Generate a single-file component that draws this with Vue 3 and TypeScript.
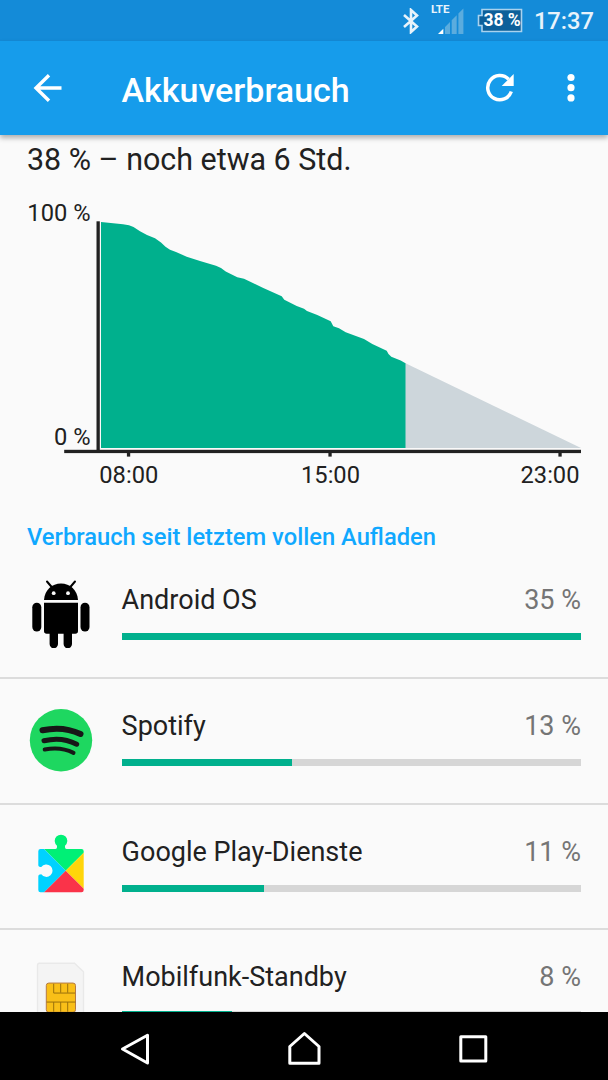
<script setup lang="ts">
interface Usage {
  id: string
  name: string
  share: number
  fill: number
}

const usages: Usage[] = [
  { id: 'android', name: 'Android OS', share: 35, fill: 100 },
  { id: 'spotify', name: 'Spotify', share: 13, fill: 37.1 },
  { id: 'play', name: 'Google Play-Dienste', share: 11, fill: 31.1 },
  { id: 'sim', name: 'Mobilfunk-Standby', share: 8, fill: 24 },
]

const history: [number, number][] = [
  [101, 222], [123, 224.3], [129, 225.3], [133.5, 227], [140, 231.3], [147, 235], [155, 238.2], [161, 242.5],
  [165.5, 246.7], [170, 249.7], [176, 252], [186.7, 256.7], [200, 260.9], [216, 265.8], [221, 268],
  [225.7, 271.5], [237.3, 277.3], [244, 278.7], [263.3, 287.9], [281.7, 296.3], [284.3, 299.7],
  [296.7, 306], [304, 308.7], [307, 311], [317.3, 315], [330.7, 321.3], [333.3, 326.3], [339, 328.3],
  [345.7, 332.3], [364, 339], [372.3, 344], [386.7, 350.7], [388.5, 354], [391.3, 356.7], [400.7, 360.5], [405.5, 363.3],
]
const area = `M101 448 L${history.map((p) => p.join(' ')).join(' L')} L405.5 448 Z`
const ticks = [
  { x: 128.5, labelX: 128.8, text: '08:00' },
  { x: 330, labelX: 330.5, text: '15:00' },
  { x: 560, labelX: 550, text: '23:00' },
]
</script>

<template>
  <div class="screen">
    <header class="status">
      <svg class="bt" width="18" height="26" viewBox="0 0 18 26">
        <path d="M2 7 L15 18.5 L9 24 V2 L15 7.5 L2 19" />
      </svg>
      <div class="cell">
        <span class="lte">LTE</span>
        <svg width="34" height="34" viewBox="432 0 34 34">
          <path class="dim" d="M446 34V27L451 22V34ZM452.700 34V20.300L457.700 15.300V34ZM459.400 34V13.600L464.400 8.600V34Z" />
          <path class="lit" d="M439 34L444.300 28.700V34Z" />
        </svg>
      </div>
      <div class="battery">
        <svg width="46" height="25" viewBox="0 0 46 25">
          <path d="M5 1.500H44.500V23.500H5V17.500H1.500V7.500H5Z" />
        </svg>
        <span>38 %</span>
      </div>
      <span class="clock">17:37</span>
    </header>

    <div class="toolbar">
      <svg class="back" width="32" height="32" viewBox="0 0 32 32">
        <path d="M29.500 16H5M17 3.200L4 16L17 28.800" />
      </svg>
      <h1>Akkuverbrauch</h1>
      <svg class="refresh" width="40" height="40" viewBox="480 68 40 40">
        <path class="arc" d="M511.300 91.500A12.100 12.100 0 1 1 508.600 79.300" />
        <path class="tip" d="M513.700 74V86H501.700Z" />
      </svg>
      <svg class="more" width="12" height="32" viewBox="0 0 12 32">
        <circle cx="6" cy="5.500" r="3.600" />
        <circle cx="6" cy="15.700" r="3.600" />
        <circle cx="6" cy="25.900" r="3.600" />
      </svg>
    </div>

    <main>
      <p class="summary">38 % – noch etwa 6 Std.</p>
      <svg class="chart" width="608" height="310" viewBox="0 190 608 310">
        <path class="forecast" d="M405 448V363L581 448Z" />
        <path class="used" :d="area" />
        <rect class="axis" x="96.500" y="221.300" width="3.300" height="230" />
        <rect class="axis" x="64.200" y="449.800" width="516.800" height="3.300" />
        <rect v-for="t in ticks" :key="t.text" class="axis" :x="t.x - 1.600" y="452" width="3.300" height="4.600" />
        <text x="90.500" y="221" text-anchor="end">100 %</text>
        <text x="90.500" y="444.500" text-anchor="end">0 %</text>
        <text v-for="t in ticks" :key="t.text" :x="t.labelX" y="482.700" text-anchor="middle">{{ t.text }}</text>
      </svg>
      <h2>Verbrauch seit letztem vollen Aufladen</h2>

      <ul>
        <li v-for="u in usages" :key="u.id">
          <svg v-if="u.id === 'android'" class="icon" viewBox="27 580 68 68">
            <path d="M47 581.500L52.500 588M75 581.500L69.500 588" fill="none" stroke="#000" stroke-width="2" stroke-linecap="round" />
            <path d="M44 600C44.500 590 52 583.500 61 583.500S77.500 590 78 600Z" />
            <circle cx="53.700" cy="593.200" r="1.900" fill="#fafafa" />
            <circle cx="68" cy="593.200" r="1.900" fill="#fafafa" />
            <path d="M44 602.700H78V631Q78 633.700 75.300 633.700H72V644A4.200 4.200 0 0 1 63.600 644V633.700H58V644A4.200 4.200 0 0 1 49.600 644V633.700H46.700Q44 633.700 44 631Z" />
            <rect x="32.300" y="602.800" width="9" height="28.700" rx="4.500" />
            <rect x="80.500" y="602.800" width="9" height="28.700" rx="4.500" />
          </svg>
          <svg v-else-if="u.id === 'spotify'" class="icon" viewBox="27 705.750 68 68">
            <circle cx="61" cy="740" r="31.200" fill="#1ed760" />
            <g fill="none" stroke="#171717" stroke-linecap="round">
              <path d="M42.500 730Q63 725.500 80.500 733.700" stroke-width="6" />
              <path d="M44 740.500Q61.500 736 76.700 744" stroke-width="5" />
              <path d="M44.700 749.300Q60.500 746 73.500 752.600" stroke-width="4" />
            </g>
          </svg>
          <svg v-else-if="u.id === 'play'" class="icon" viewBox="27 832 68 68">
            <defs>
              <clipPath id="puzzle">
                <path d="M40.500 849H55.500Q57 849 57 847.200V845.800A6.300 6.300 0 1 1 65 845.800V847.200Q65 849 66.500 849H81.500Q83.700 849 83.700 851.200V890.100Q83.700 892.300 81.500 892.300H40.500Q38.300 892.300 38.300 890.100V876.500Q38.300 874.300 41.300 874.300A6.200 6.200 0 1 0 41.300 867.100Q38.300 867.100 38.300 865V851.200Q38.300 849 40.500 849Z" />
              </clipPath>
            </defs>
            <g clip-path="url(#puzzle)">
              <path d="M34 834H88V848.500L65.700 870.700L38 843Z" fill="#00f076" />
              <path d="M36 841L65.700 870.700L42 894.400H36Z" fill="#00d2ff" />
              <path d="M85 851.400V890L65.700 870.700Z" fill="#ffd50a" />
              <path d="M65.700 870.700L87 892V895H41.400Z" fill="#fa3349" />
            </g>
          </svg>
          <svg v-else class="icon" viewBox="27 957.250 68 68">
            <path d="M39.500 963.500H74.500L83.500 972V1030H37.500V965.500Q37.500 963.500 39.500 963.500Z" fill="#f4f4f4" stroke="#e9e9e9" stroke-width="1.300" />
            <rect x="46.300" y="983.300" width="29.200" height="29.200" rx="2.500" fill="#f9bf18" stroke="#b47a45" />
            <path d="M75 993.300H53.700V984M60.700 984V993M67.700 984V993M46.500 1002.300H75.500M53.700 1002.300V1012M60.700 1002.300V1012M67.700 1002.300V1012" fill="none" stroke="#99700c" />
          </svg>
          <div class="details">
            <div class="labels">
              <span>{{ u.name }}</span>
              <span class="share">{{ u.share }} %</span>
            </div>
            <div class="track"><div class="fill" :style="{ width: u.fill + '%' }"></div></div>
          </div>
        </li>
      </ul>
    </main>

    <nav>
      <svg width="608" height="68" viewBox="0 1012 608 68">
        <path d="M147.500 1035.300V1063L122.500 1049Z" />
        <path d="M289.800 1063.300V1046.500L304.400 1033.500L319 1046.500V1063.300Z" />
        <rect x="460.800" y="1036.700" width="25" height="24.300" />
      </svg>
    </nav>
  </div>
</template>

<style>
body {
  margin: 0;
}
</style>

<style scoped>
.screen {
  width: 608px;
  height: 1080px;
  overflow: hidden;
  display: flex;
  flex-direction: column;
  background: #fafafa;
  color: #212121;
  font-family: Roboto, sans-serif;
}
svg {
  display: block;
  flex: none;
}
.status {
  flex: none;
  height: 41px;
  box-sizing: border-box;
  padding-right: 14px;
  display: flex;
  align-items: center;
  justify-content: flex-end;
  background: #148bd8;
  color: #e8f3fb;
}
.bt {
  margin-right: 11px;
}
.bt path {
  fill: none;
  stroke: #e8f3fb;
  stroke-width: 2.6;
}
.cell {
  position: relative;
  height: 41px;
  margin-right: 12px;
}
.lte {
  position: absolute;
  left: 0;
  top: 3px;
  font-size: 11.5px;
  line-height: 13px;
  font-weight: 700;
}
.dim {
  fill: #5bacde;
}
.lit {
  fill: #fff;
}
.battery {
  position: relative;
  margin-right: 11px;
}
.battery path {
  fill: #0d609a;
  stroke: #a9d2ee;
  stroke-width: 1.6;
}
.battery span {
  position: absolute;
  inset: 0 0 0 6.5px;
  font-size: 17.5px;
  line-height: 24px;
  font-weight: 700;
  color: #fff;
  white-space: nowrap;
}
.clock {
  font-size: 23.7px;
  line-height: 28px;
  margin-top: 1px;
  font-weight: 500;
}
.toolbar {
  flex: none;
  height: 94px;
  position: relative;
  display: flex;
  align-items: center;
  background: #169ceb;
  color: #fff;
  box-shadow: 0 3px 5px rgba(0, 0, 0, 0.3);
}
.back {
  margin-left: 31.5px;
}
.back path {
  fill: none;
  stroke: #fff;
  stroke-width: 3.4;
}
h1 {
  margin: 4px auto 0 58px;
  font-size: 34px;
  font-weight: 500;
  line-height: 40px;
}
.refresh {
  margin-right: 45px;
}
.arc {
  fill: none;
  stroke: #fff;
  stroke-width: 3.5;
}
.tip,
.more {
  fill: #fff;
}
.more {
  margin-right: 31px;
}
main {
  height: 877px;
  overflow: hidden;
}
.summary {
  margin: 0;
  padding: 6px 27px 0;
  height: 49px;
  line-height: 38px;
  font-size: 30.45px;
}
.chart text {
  font-size: 23.7px;
  fill: #212121;
}
.axis {
  fill: #212121;
}
.used {
  fill: #00b08d;
}
.forecast {
  fill: #cdd6db;
}
h2 {
  margin: 0;
  padding: 23px 27px 0;
  height: 25px;
  line-height: 28px;
  font-size: 23.72px;
  font-weight: 500;
  color: #10a8ff;
}
ul {
  margin: 0;
  padding: 5.2px 0 0;
  list-style: none;
}
li {
  height: 125.75px;
  box-sizing: border-box;
  padding: 27px 27px 0;
  display: flex;
  gap: 26.6px;
  border-bottom: 2px solid #dcdcdc;
}
.icon {
  width: 68px;
  height: 68px;
}
.details {
  flex: 1;
}
.labels {
  display: flex;
  justify-content: space-between;
  height: 53.2px;
  line-height: 41px;
  font-size: 27px;
}
.share {
  color: #757575;
}
.track {
  height: 7px;
  background: #d6d6d6;
}
.fill {
  height: 100%;
  background: #00b08d;
}
nav {
  height: 68px;
  background: #000;
}
nav path,
nav rect {
  fill: none;
  stroke: #fff;
  stroke-width: 3;
  stroke-linejoin: round;
}
</style>
